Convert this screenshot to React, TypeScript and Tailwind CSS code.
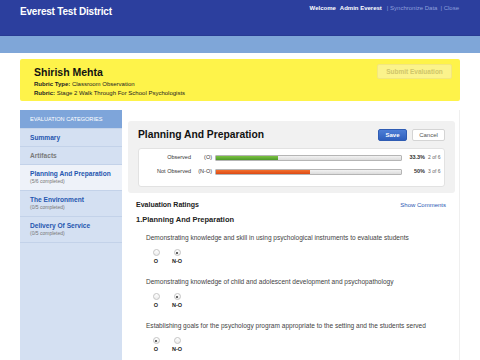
import React from "react";

function Radio({ checked }: { checked: boolean }) {
  return (
    <span className="flex h-[7px] w-[7px] items-center justify-center rounded-full border border-[#c4c4c4] bg-gradient-to-b from-[#ffffff] to-[#ececec]">
      {checked && <span className="h-[2px] w-[2px] rounded-full bg-[#333]" />}
    </span>
  );
}

function Question({ text, value }: { text: string; value: "O" | "N-O" }) {
  return (
    <div className="pl-[10px]">
      <div className="text-[6.55px] leading-[8px] text-[#444] whitespace-nowrap">{text}</div>
      <div className="mt-[7px] flex gap-[13px] pl-[6px]">
        <div className="flex w-[8px] flex-col items-center">
          <Radio checked={value === "O"} />
          <span className="mt-[2px] text-[5.5px] font-bold leading-[6px] text-[#222]">O</span>
        </div>
        <div className="flex w-[8px] flex-col items-center">
          <Radio checked={value === "N-O"} />
          <span className="mt-[2px] whitespace-nowrap text-[5.5px] font-bold leading-[6px] text-[#222]">N-O</span>
        </div>
      </div>
    </div>
  );
}

function StatRow({
  label,
  code,
  pct,
  fill,
  color,
  count,
}: {
  label: string;
  code: string;
  pct: string;
  fill: number;
  color: string;
  count: string;
}) {
  return (
    <div className="flex items-center h-[7px]">
      <div className="w-[52px] text-right text-[5.5px] leading-[7px] text-[#333] whitespace-nowrap">{label}</div>
      <div className="w-[21px] text-right text-[5.5px] leading-[7px] text-[#333] whitespace-nowrap">{code}</div>
      <div className="ml-[3px] h-[6px] w-[187px] rounded-[1px] border border-[#b5b5b5] bg-gradient-to-b from-[#f2f2f2] to-[#dcdcdc] overflow-hidden">
        <div className={`h-full ${color}`} style={{ width: `${fill}%` }} />
      </div>
      <div className="w-[23px] text-right text-[5.5px] font-bold leading-[7px] text-[#333]">{pct}</div>
      <div className="pl-[3px] text-[5px] leading-[7px] text-[#666] whitespace-nowrap">{count}</div>
    </div>
  );
}

export default function App() {
  return (
    <div className="h-[360px] w-[480px] overflow-hidden bg-white font-['Liberation_Sans',Arial,sans-serif]">
      <header className="flex h-[36px] justify-between bg-[#2c3f9e] pl-5 pr-[21px] border-b border-[#283a93]">
        <div className="pt-[6px] text-[10px] font-bold leading-[12px] tracking-[-0.2px] text-white">
          Everest Test District
        </div>
        <div className="flex pt-[4px] text-[6px] leading-[8px] whitespace-nowrap">
          <span className="font-bold text-white">Welcome</span>
          <span className="ml-[4px] font-bold text-white">Admin Everest</span>
          <span className="ml-[5px] text-[#8e9fdc]">| Synchronize Data</span>
          <span className="ml-[3px] text-[#8e9fdc]">| Close</span>
        </div>
      </header>
      <div className="h-[17px] bg-[#7fa6d8]" />

      <div className="px-5 pt-[6px]">
        <div className="flex h-[42px] justify-between rounded-[2px] bg-[#fef34a] pl-[14px] pr-[8px]">
          <div className="pt-[7px]">
            <div className="text-[10.5px] font-bold leading-[12px] text-[#111]">Shirish Mehta</div>
            <div className="mt-[2px] text-[6px] leading-[8px] text-[#222]">
              <span className="font-bold">Rubric Type:</span> Classroom Observation
            </div>
            <div className="mt-[1px] text-[6px] leading-[8px] text-[#222]">
              <span className="font-bold">Rubric:</span> Stage 2 Walk Through For School Psychologists
            </div>
          </div>
          <div className="pt-[5px]">
            <div className="flex h-[15px] w-[75px] items-center justify-center rounded-[2px] border border-[#f3e77e] bg-[#fbf38c] text-[6.5px] font-bold text-[#d0c66a]">
              Submit Evaluation
            </div>
          </div>
        </div>

        <div className="mt-[9px] flex">
          <aside className="h-[260px] w-[102px] shrink-0 bg-[#d4e0f2]">
            <div className="flex h-[19px] items-center border-b border-[#c5d4ea] bg-[#7ea5da] pl-[10px] text-[5.6px] leading-[7px] text-white">
              EVALUATION CATEGORIES
            </div>
            <div className="flex h-[18px] items-center border-b border-[#c3d2e9] pl-[10px] text-[6.6px] font-bold text-[#2556af]">
              Summary
            </div>
            <div className="flex h-[18px] items-center border-b border-[#c3d2e9] pl-[10px] text-[6.6px] font-bold text-[#7a7a7a]">
              Artifacts
            </div>
            <div className="flex h-[26px] flex-col justify-center border-b border-[#c3d2e9] bg-[#eef2f9] pl-[10px]">
              <div className="text-[6.6px] font-bold leading-[8px] text-[#2556af]">Planning And Preparation</div>
              <div className="text-[5px] leading-[7px] text-[#777]">(5/6 completed)</div>
            </div>
            <div className="flex h-[26px] flex-col justify-center border-b border-[#c3d2e9] pl-[10px]">
              <div className="text-[6.6px] font-bold leading-[8px] text-[#2556af]">The Environment</div>
              <div className="text-[5px] leading-[7px] text-[#777]">(0/5 completed)</div>
            </div>
            <div className="flex h-[26px] flex-col justify-center border-b border-[#c3d2e9] pl-[10px]">
              <div className="text-[6.6px] font-bold leading-[8px] text-[#2556af]">Delivery Of Service</div>
              <div className="text-[5px] leading-[7px] text-[#777]">(0/5 completed)</div>
            </div>
          </aside>

          <main className="h-[260px] flex-1 border-r border-[#efefef] pt-[11px]">
            <div className="ml-[6px] mr-[4px] rounded-[3px] bg-[#f1f1f1] px-[10px] pb-[6px] pt-[8px]">
              <div className="flex items-center justify-between">
                <div className="text-[10.3px] font-bold leading-[12px] text-[#111]">Planning And Preparation</div>
                <div className="flex gap-[5px]">
                  <div className="flex h-[12px] w-[29px] items-center justify-center rounded-[2px] border border-[#2f5cb3] bg-gradient-to-b from-[#4d7ed6] to-[#2f5fbd] text-[6px] font-bold text-white">
                    Save
                  </div>
                  <div className="flex h-[12px] w-[33px] items-center justify-center rounded-[2px] border border-[#d4d4d4] bg-white text-[6px] text-[#555]">
                    Cancel
                  </div>
                </div>
              </div>
              <div className="mt-[7px] flex flex-col gap-[7px] rounded-[3px] border border-[#e2e2e2] bg-white pb-[11px] pt-[5px]">
                <StatRow label="Observed" code="(O)" pct="33.3%" fill={33.7} color="bg-gradient-to-b from-[#7cc242] to-[#4d9a2a]" count="2 of 6" />
                <StatRow label="Not Observed" code="(N-O)" pct="50%" fill={51} color="bg-gradient-to-b from-[#f3702e] to-[#dc4a14]" count="3 of 6" />
              </div>
            </div>

            <div className="ml-[14px] mr-[13px] mt-[7px] flex items-center justify-between">
              <div className="text-[7px] font-bold leading-[9px] text-[#222]">Evaluation Ratings</div>
              <div className="text-[6px] leading-[8px] text-[#2a58b3]">Show Comments</div>
            </div>
            <div className="ml-[14px] mt-[6px] text-[7.5px] font-bold leading-[9px] text-[#222]">
              1.Planning And Preparation
            </div>
            <div className="ml-[14px] mt-[10px] flex flex-col gap-[14px]">
              <Question
                text="Demonstrating knowledge and skill in using psychological instruments to evaluate students"
                value="N-O"
              />
              <Question
                text="Demonstrating knowledge of child and adolescent development and psychopathology"
                value="N-O"
              />
              <Question
                text="Establishing goals for the psychology program appropriate to the setting and the students served"
                value="O"
              />
            </div>
          </main>
        </div>
      </div>
    </div>
  );
}
